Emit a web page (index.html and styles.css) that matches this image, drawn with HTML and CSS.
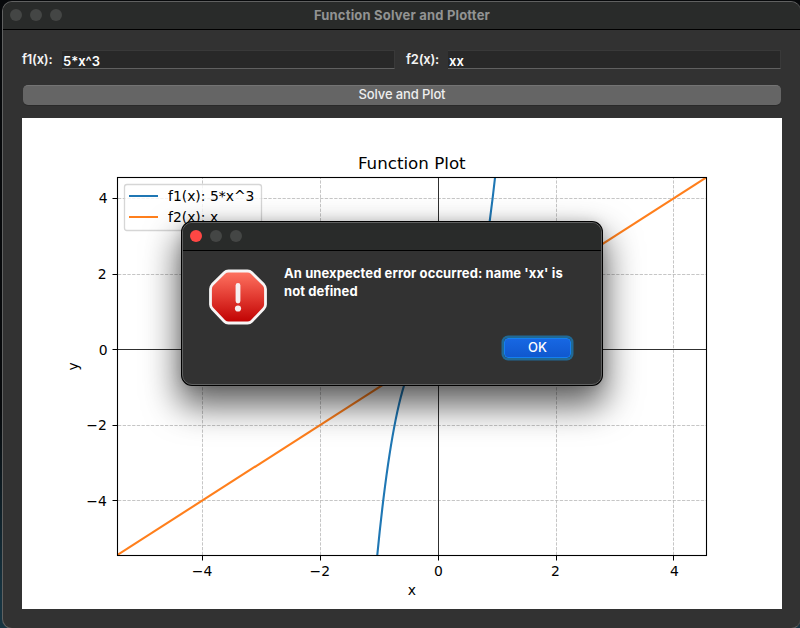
FILE: index.html
```html
<!DOCTYPE html>
<html lang="en">
<head>
<meta charset="utf-8">
<title>Function Solver and Plotter</title>
<link rel="stylesheet" href="styles.css">
</head>
<body>
<main class="window">
  <header class="titlebar">
    <div class="lights"><i></i><i></i><i></i></div>
    <h1 class="title">Function Solver and Plotter</h1>
  </header>
  <div class="content">
    <div class="inputs">
      <label class="label" for="f1">f1(x):</label>
      <input class="field" id="f1" value="5*x^3">
      <label class="label second" for="f2">f2(x):</label>
      <input class="field" id="f2" value="xx">
    </div>
    <button class="solve">Solve and Plot</button>
    <svg class="plot" viewBox="22 118 760 491" width="760" height="491">
      <defs><clipPath id="axes"><rect x="117.5" y="177.5" width="589" height="378"/></clipPath></defs>
      <g class="grid">
        <path d="M202.5 555V178M320.5 555V178M438.5 555V178M556.5 555V178M673.5 555V178"/>
        <path d="M118 198.5H706M118 274.5H706M118 349.5H706M118 425.5H706M118 500.5H706"/>
      </g>
      <g clip-path="url(#axes)">
        <path class="zero" d="M118 349.5H706M438.5 178V555"/>
        <path class="curve blue" d="M377.2 555.8C416.6 155.7 455.8 532 495.1 177"/>
        <path class="curve orange" d="M117 555.2L707 177"/>
      </g>
      <rect class="frame" x="117.5" y="177.5" width="589" height="378"/>
      <path class="ticks" d="M202.5 556v4.5M320.5 556v4.5M438.5 556v4.5M556.5 556v4.5M673.5 556v4.5M117 198.5h-4.5M117 274.5h-4.5M117 349.5h-4.5M117 425.5h-4.5M117 500.5h-4.5"/>
      <g class="num mid">
        <text x="202" y="576">−4</text><text x="319.8" y="576">−2</text><text x="438.3" y="576">0</text><text x="555.5" y="576">2</text><text x="674.3" y="576">4</text>
        <text x="411.8" y="595">x</text>
        <text transform="translate(78 366.5) rotate(-90)">y</text>
      </g>
      <g class="num end">
        <text x="107.5" y="203">4</text><text x="106.5" y="279">2</text><text x="107.5" y="355">0</text><text x="106.8" y="430">−2</text><text x="106.8" y="506">−4</text>
      </g>
      <text class="heading" x="411.8" y="169">Function Plot</text>
      <rect class="legend" x="124.5" y="184.5" width="137" height="46" rx="2.5"/>
      <path class="curve blue" d="M129 196H158"/>
      <path class="curve orange" d="M129 217H158"/>
      <g class="num"><text x="168" y="201">f1(x): 5*x^3</text><text x="168" y="222">f2(x): x</text></g>
    </svg>
  </div>
</main>
<section class="dialog" role="alertdialog">
  <div class="dialog-bar"><div class="lights active"><i></i><i></i><i></i></div></div>
  <div class="dialog-body">
    <svg class="stop" width="60" height="58" viewBox="0 0 60 58">
      <defs><linearGradient id="red" x1="0" y1="0" x2="0" y2="1"><stop offset="0" stop-color="#ff7562"/><stop offset=".5" stop-color="#e23a31"/><stop offset="1" stop-color="#bf0000"/></linearGradient></defs>
      <path d="M20.5 3H39.5Q42 3 43.8 4.8L55.7 16.6Q57.5 18.5 57.5 21V36.5Q57.5 39 55.7 40.8L43.8 53.2Q42 55 39.5 55H20.5Q18 55 16.2 53.2L4.3 40.8Q2.5 39 2.5 36.5V21Q2.5 18.5 4.3 16.6L16.2 4.8Q18 3 20.5 3Z" fill="url(#red)" stroke="#f7f5f5" stroke-width="2.8"/>
      <path d="M30 17.5V33" stroke="#f6f0f0" stroke-width="4.8" stroke-linecap="round"/>
      <circle cx="30" cy="40.5" r="3.1" fill="#f6eeee"/>
    </svg>
    <p class="message">An unexpected error occurred: name 'xx' is<br>not defined</p>
  </div>
  <div class="actions"><button class="ok">OK</button></div>
</section>
</body>
</html>
```
FILE: styles.css
```css
* { box-sizing: border-box; }
body {
  margin: 0;
  width: 800px;
  height: 628px;
  overflow: hidden;
  background: linear-gradient(#07090b 65%, #173441 95%);
  font: 500 13px Inter, "Liberation Sans", sans-serif;
  color: #f4f4f4;
}
.window {
  width: 799px;
  height: 628px;
  margin: 1px 0 0 2px;
  border: 1px solid #606161;
  border-right-color: #464747;
  border-radius: 10px;
  background: #323232;
  overflow: hidden;
}
.titlebar {
  display: flex;
  align-items: center;
  height: 28px;
  padding-left: 7px;
  background: #292b2a;
  border-bottom: 1px solid #000;
}
.lights { display: flex; gap: 8px; width: 52px; margin-top: -1px; }
.lights i { width: 12px; height: 12px; border-radius: 50%; background: #444645; }
.lights.active i:first-child { background: #ff4744; }
.title {
  margin: -2px 58px 0 0;
  flex: 1;
  text-align: center;
  font-size: 13px;
  font-weight: 700;
  letter-spacing: .19px;
  line-height: 16px;
  color: #929393;
}
.content { padding: 20px 18px 0 19px; }
.inputs { display: flex; height: 19px; }
.label { width: 40px; line-height: 19px; font-weight: 600; letter-spacing: -.25px; }
.label.second { width: 42px; margin-left: 11px; }
.field {
  width: 333px;
  height: 19px;
  padding: 2px 0 0 1px;
  border: 1px solid #393939;
  border-width: 1px 1px 1px 0;
  border-bottom-color: #606060;
  background: #282828;
  color: #fff;
  font: inherit;
  font-weight: 600;
  outline: 0;
}
.solve {
  display: block;
  width: 758px;
  height: 20px;
  margin: 16px 0 0 1px;
  padding: 0 0 2px;
  border: 0;
  border-top: 1px solid #747474;
  border-radius: 5px;
  background: #656565;
  box-shadow: 0 1px 0 #292929;
  color: #eee;
  font: 500 13px/17px Inter, sans-serif;
  letter-spacing: -.12px;
}
.plot { display: block; margin-top: 13px; background: #fff; }
.grid { fill: none; stroke: #b7b7b7; stroke-width: .8; stroke-dasharray: 3.3 1.4; }
.zero { fill: none; stroke: #303030; stroke-width: 1; }
.frame { fill: none; stroke: #000; stroke-width: 1.1; }
.ticks { fill: none; stroke: #000; stroke-width: 1; }
.curve { fill: none; stroke-width: 2.1; }
.blue { stroke: #1f77b4; }
.orange { stroke: #ff7f1c; }
.legend { fill: #fff; fill-opacity: .8; stroke: #ccc; stroke-opacity: .8; stroke-width: 1.3; }
.num { font: 13.9px "DejaVu Sans", sans-serif; fill: #000; }
.mid { text-anchor: middle; }
.end { text-anchor: end; }
.heading { font: 16.7px "DejaVu Sans", sans-serif; text-anchor: middle; fill: #000; }
.dialog {
  position: absolute;
  left: 182px;
  top: 222px;
  width: 420px;
  height: 163px;
  border: 1px solid #606161;
  border-radius: 10px;
  background: #323232;
  box-shadow: 0 0 0 1px #000, 0 17px 34px 4px rgba(0,0,0,.62), 0 0 12px rgba(0,0,0,.15);
  overflow: hidden;
}
.dialog-bar { display: flex; align-items: center; height: 28px; padding-left: 7px; background: #292b2a; border-bottom: 1px solid #000; }
.dialog-body { display: flex; height: 87px; padding: 17px 0 0 25px; }
.stop { flex: none; }
.message { margin: -4px 0 0 16px; font-weight: 700; letter-spacing: .09px; line-height: 18px; color: #fff; white-space: nowrap; }
.actions { display: flex; justify-content: flex-end; padding-right: 30px; }
.ok {
  width: 67px;
  height: 20px;
  padding: 0 0 2px;
  border: 1px solid #1480ef;
  border-radius: 4px;
  background: linear-gradient(#1767e3, #1058ce);
  box-shadow: 0 0 0 2.5px #206995;
  color: #fff;
  font: 500 13px/16px Inter, sans-serif;
}
```
